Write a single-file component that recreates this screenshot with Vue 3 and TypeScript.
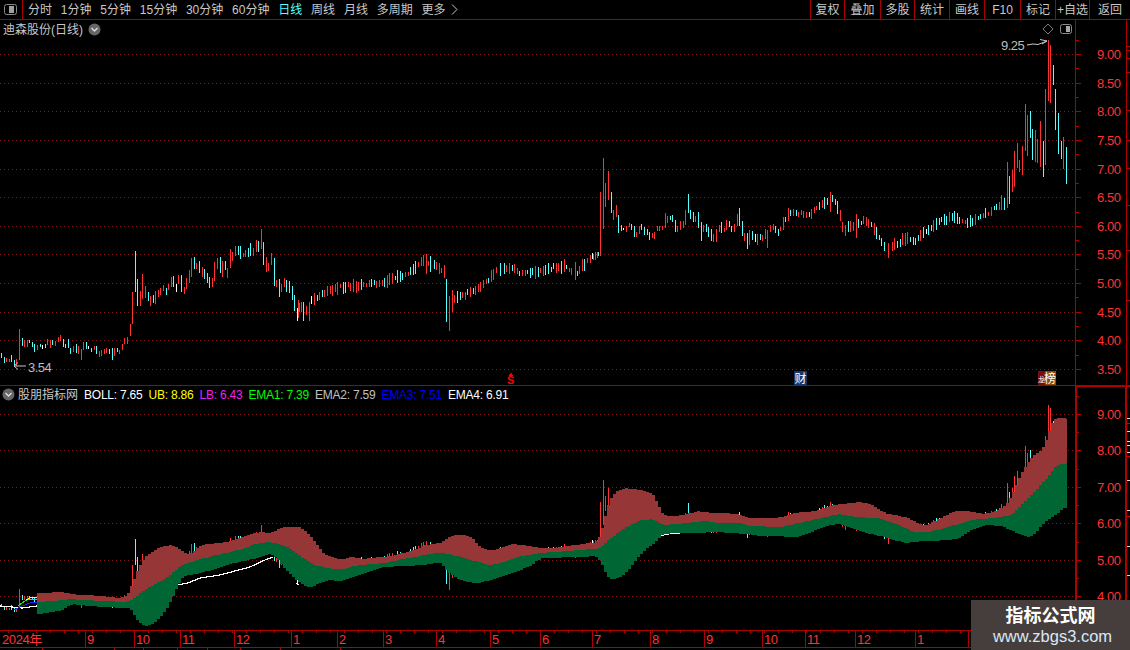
<script setup lang="ts">
type Pt = [number, number]
const RED = '#ff3232'
const CYAN = '#54ffff'
const WHITE = '#ffffff'

// measured candles: "zoomX colour y1 y2"
const z10 = `4c385-398 13c397-413 19r400-411 28r402-410 34c390-410 43c405-420 49r403-422 58r312-405 67c340-363 73r345-365 82r345-365 88c345-354 97c352-366 103c357-381 112r361-375 121c357-367 127w361-373 136c357-368 142r343-360 151r345-369 157c345-361 166r347-364 175r336-351 181r331-349 190c342-366 196c358-370 205c343-370 211c368-386 220r363-382 229c357-384 235r364-386 244r373-404 250r352-375 259c351-372 265w362-372 274c370-380 283r363-375 289c364-386 298r377-395 304r375-392 313r372-386 319r370-385 328c373-387 337c370-404 343r370-393 352c369-380 358r376-386 367r358-375 373r339-356 382r337-357 391r296-333 397r201-296 406c79-200 412c162-242 421r198-243 427r147-221 436r183-220 445c200-228 451r212-242 460c210-235 466r197-236 475r195-217 481r188-210 490r180-198 499c190-209 505r177-195 514r155-187 520c153-187 529w177-200 535r150-177 544c150-202 553r186-207 559r160-192 568r135-175 574r100-157 583c96-131 589r115-131 598c108-143 607r127-155 613c132-163 622c145-173 628c155-188 637r160-186 643r110-167 652r98-131 661c96-143 667r108-155 676c108-135 682r128-158 691r72-128 697r82-107 706r64-93 715c64-90 721c64-101 730r84-97 736r75-97 745c69-95 751c54-92 760r69-92 769r45-80 775c47-80 784r12-72 790c52-120 799r96-140 805r114-137 814r85-120 823c100-182 829r165-185 838c163-215 844r176-202 853r160-187 859c165-200 868c168-205 877c183-225 883c210-257 892w250-287 898r235-262`
const z8 = `30r318-330 39r313-330 45r310-330 54c306-318 60r127-318 70r24-237 76r99-171 85r63-150 94c126-189 100r180-210 109r165-201 115c195-249 124c225-243 130w234-240 139r228-246 148r219-231 154c222-240 163c228-261 169r246-261 178r228-252 184c222-240 193c231-255 202c237-255 208c246-270 217r249-264 223r246-267 232r229-243 238r229-243 247r229-240 256r189-234 262r198-219 271c198-210 277c195-216 286c210-246 292r229-246 301r213-240 310r213-234 316r180-225 325c132-189 331c180-207 340c186-216 346r198-216 355c186-234 364c216-273 370r225-246 379c222-246 385c231-261 394c237-273 400r252-276 409r237-276 418r225-246 424c216-249 433r234-246 439r210-240 448c213-231 454c228-246 463r222-246 472r192-228 478c174-228 487c213-258 493r249-273 502c249-297 508r240-285 517c243-270 526w252-276 532r252-285 541c252-270 547r255-273 556r237-267 562r240-294 571r225-246 580r222-240 586c228-249 595c237-258`
const z6 = `994c206-210 996c204-210 999r202-210 1001r195-210 1004c198-210 1007r162-208 1009c176-204 1012r170-192 1014r151-187 1017r143-168 1019r160-172 1022r146-175 1025r104-151 1027r115-156 1030c111-138 1032c129-160 1035r130-162 1037r139-163 1040r121-167 1043c141-177 1045r89-165 1048r40-101 1050r45-103 1053c65-85 1055c89-130 1058c113-154 1061c141-159 1063r137-169 1066c147-184`

interface Bar { x: number; c: string; a: number; b: number }
const bars: Bar[] = []
const colourOf: Record<string, string> = { r: RED, c: CYAN, w: WHITE }
function parse(src: string, fx: (v: number) => number, fy: (v: number) => number) {
  for (const tok of src.split(/\s+/)) {
    const m = /^(\d+)([rcw])(\d+)-(\d+)$/.exec(tok)
    if (!m) continue
    bars.push({ x: Math.round(fx(+m[1])), c: colourOf[m[2]], a: fy(+m[3]), b: fy(+m[4]) })
  }
}
parse(z10, v => v / 3, v => Math.round(225 + v / 3))
parse(z8, v => 580 + v / 3, v => Math.round(150 + v / 3))
parse(z6, v => v, v => v)

// mid line of the stretches filled in by a seeded generator
const midA: Pt[] = [[301,308],[306,310],[312,300],[318,296],[325,292],[340,287],[360,285],[380,283],[400,277],[415,268],[423,260],[430,263],[440,268],[444,272],[453,300],[460,297],[470,292],[480,288],[490,278],[497,268],[510,268],[520,272],[535,272],[550,268],[565,266],[575,276],[583,265],[590,258],[597,254]]
const midB: Pt[] = [[780,228],[790,212],[800,214],[810,215],[818,206],[825,203],[832,199],[838,208],[843,230],[855,224],[865,220],[872,225],[880,240],[888,251],[895,245],[905,238],[915,241],[925,232],[935,224],[945,219],[955,217],[965,222],[975,220],[985,214],[992,210]]
const extra: [number, string, number, number][] = [[298,RED,300,318],[303,CYAN,302,321],[309,RED,302,321],[426,RED,254,274],[430,CYAN,256,272],[446,CYAN,279,322],[449,RED,296,331],[452,RED,290,312],[500,CYAN,263,276],[575,RED,262,280],[597,RED,252,258],[830,RED,192,212],[888,RED,243,258],[856,RED,214,238]]

function lerp(pts: Pt[], x: number): number {
  if (x <= pts[0][0]) return pts[0][1]
  for (let i = 1; i < pts.length; i++) {
    if (x <= pts[i][0]) {
      const [x0, y0] = pts[i - 1]
      const [x1, y1] = pts[i]
      return y0 + (y1 - y0) * (x - x0) / (x1 - x0)
    }
  }
  return pts[pts.length - 1][1]
}
let seed = 4711
const rnd = () => { seed = (seed * 16807) % 2147483647; return seed / 2147483647 }
function fill(pts: Pt[]) {
  const start = pts[0][0]
  const end = pts[pts.length - 1][0]
  for (let x = start; x <= end; x += 2.6) {
    const px = Math.round(x)
    if (extra.some(e => Math.abs(e[0] - px) < 2)) continue
    const m = lerp(pts, x) + (rnd() - 0.5) * 3
    const h = 2 + rnd() * 4.5
    const up = rnd() > 0.42
    bars.push({ x: px, c: rnd() > 0.97 ? WHITE : up ? RED : CYAN, a: Math.round(m - h), b: Math.round(m + h) })
  }
}
fill(midA)
fill(midB)
for (const e of extra) bars.push({ x: e[0], c: e[1], a: e[2], b: e[3] })

const upperY = (y: number) => y
const lowerY = (y: number) => Math.round(414 + (y - 54) * 0.6356)
function barPath(colour: string, map: (y: number) => number): string {
  return bars.filter(b => b.c === colour)
    .map(b => `M${b.x + 0.5} ${map(b.a)}V${Math.max(map(b.b), map(b.a) + 1)}`).join('')
}
const candleSets = [RED, CYAN, WHITE].map(c => ({ c, top: barPath(c, upperY), low: barPath(c, lowerY) }))

// band edges of the lower panel
const bandTop: Pt[] = [[37,593],[63,592],[68,594],[100,596],[120,598],[128,594],[133,577],[143,557],[160,546],[172,545],[183,553],[188,555],[200,545],[227,542],[257,532],[270,533],[280,527],[300,527],[310,537],[323,555],[340,560],[350,556],[360,559],[390,556],[413,550],[423,545],[440,543],[447,537],[457,534],[470,537],[480,548],[490,551],[510,544],[523,545],[540,548],[553,548],[573,545],[597,542],[603,523],[607,500],[617,490],[623,488],[640,490],[653,494],[660,514],[670,517],[685,514],[697,511],[710,513],[723,513],[737,514],[747,518],[777,518],[793,513],[813,511],[833,505],[857,502],[870,504],[883,513],[907,518],[923,526],[940,518],[953,511],[967,511],[983,514],[993,512],[1003,507],[1010,497],[1020,473],[1030,457],[1043,449],[1048,430],[1053,417],[1067,419]]
const bandMid: Pt[] = [[37,602],[63,600],[68,599],[100,601],[128,602],[143,590],[167,577],[180,565],[203,558],[237,550],[257,543],[270,542],[287,547],[300,557],[313,565],[327,568],[340,570],[350,566],[383,563],[407,558],[440,552],[450,555],[460,557],[487,565],[497,564],[520,556],[540,553],[580,550],[600,548],[607,540],[623,528],[640,520],[653,519],[660,525],[677,524],[703,521],[717,523],[740,523],[747,526],[780,527],[807,521],[837,514],[853,517],[877,518],[893,523],[913,532],[927,532],[947,527],[970,520],[993,518],[1010,515],[1030,495],[1047,477],[1055,465],[1067,463]]
const bandLow: Pt[] = [[37,614],[63,610],[68,604],[100,607],[130,608],[137,623],[145,627],[157,620],[167,607],[177,585],[180,577],[203,572],[233,563],[260,557],[272,553],[280,565],[297,582],[307,588],[327,580],[340,581],[357,575],[383,567],[423,565],[440,562],[447,573],[463,582],[477,583],[497,578],[527,567],[540,558],[580,557],[597,556],[602,567],[608,581],[623,575],[640,553],[657,540],[660,534],[677,533],[693,533],[713,532],[747,534],[760,536],[780,536],[793,538],[810,532],[827,525],[840,524],[860,532],[887,538],[903,543],[923,541],[933,541],[957,539],[970,530],[983,525],[1000,526],[1020,535],[1030,538],[1043,522],[1057,513],[1063,507],[1067,508]]

// smoothed, then held per candle column, which gives the chart its stepped edge
function stepped(pts: Pt[]): Pt[] {
  const out: Pt[] = []
  const start = pts[0][0]
  const end = pts[pts.length - 1][0]
  const at = (x: number) => {
    let sum = 0
    for (let d = -4; d <= 4; d += 1) sum += lerp(pts, Math.min(end, Math.max(start, x + d)))
    return Math.round(sum / 9)
  }
  let prev = at(start)
  out.push([start, prev])
  for (let x = start + 3; x <= end; x += 3) {
    const y = at(x)
    out.push([x, prev], [x, y])
    prev = y
  }
  out.push([end, prev])
  return out
}
function bandPoly(top: Pt[], bottom: Pt[]): string {
  const a = stepped(top)
  const b = stepped(bottom).reverse()
  return [...a, ...b].map(p => p.join(',')).join(' ')
}
const redBand = bandPoly(bandTop, bandMid)
const greenBand = bandPoly(bandMid, bandLow)
const toPoints = (p: Pt[]) => p.map(q => q.join(',')).join(' ')
const whiteSegs = [
  toPoints([[0,606],[12,607],[22,608],[37,606]]),
  toPoints([[177,585],[188,583],[200,578],[220,575],[250,567],[265,560],[273,557]]),
  toPoints([[296,583],[299,585]]),
  toPoints([[658,537],[663,535],[668,534],[680,533]]),
]
const startLines = [
  { c: '#2020ff', p: toPoints([[14,610],[22,606],[30,603],[37,602]]) },
  { c: '#00ff00', p: toPoints([[18,606],[22,603],[28,599],[37,600]]) },
  { c: '#ffff00', p: toPoints([[26,600],[30,598],[37,597]]) },
]

const topLabels = ['9.00','8.50','8.00','7.50','7.00','6.50','6.00','5.50','5.00','4.50','4.00','3.50']
  .map((t, i) => ({ t, y: Math.round(54 + i * 28.64) }))
const topMinor = Array.from({ length: 12 }, (_, i) => Math.round(54 - 14.3 + i * 28.64))
const lowLabels = ['9.00','8.00','7.00','6.00','5.00','4.00'].map((t, i) => ({ t, y: Math.round(414 + i * 36.4) }))
const lowMinor = Array.from({ length: 7 }, (_, i) => Math.round(396 + i * 36.4))
const sideMarksTop = [46, 50, 58, 72, 110, 140, 168, 205, 250, 300]
const sideMarksLow: [number, string][] = [[418,'#ddd'],[423,'#c00'],[431,'#ddd'],[441,'#ddd'],[445,'#ddd'],[452,'#ddd'],[456,'#c00'],[480,'#ddd'],[510,'#ddd'],[516,'#c00'],[546,'#ddd'],[575,'#ddd']]

const months = [[0,'2024年'],[85,'9'],[134,'10'],[180,'11'],[234,'12'],[291,'1'],[337,'2'],[383,'3'],[436,'4'],[490,'5'],[540,'6'],[592,'7'],[650,'8'],[704,'9'],[762,'10'],[805,'11'],[855,'12'],[915,'1'],[968,'2']] as [number, string][]
const axisTicks = Array.from({ length: 80 }, (_, i) => 14 * i + 8)

const tabs = ['分时', '1分钟', '5分钟', '15分钟', '30分钟', '60分钟', '日线', '周线', '月线', '多周期']
const tools = [['复权',34],['叠加',36],['多股',34],['统计',35],['画线',35],['F10',36],['标记',35],['+自选',34],['返回',41]] as [string, number][]
const toolColumns = tools.map(t => `${t[1]}px`).join(' ')
const legend = [
  ['BOLL: 7.65', '#ffffff'], ['UB: 8.86', '#ffff00'], ['LB: 6.43', '#ee22ee'], ['EMA1: 7.39', '#00ff00'],
  ['EMA2: 7.59', '#c0c0c0'], ['EMA3: 7.51', '#0000f0'], ['EMA4: 6.91', '#ffffff'],
]
const bottomCells = [43, 72, 29, 34, 30, 33, 40, 60]
</script>

<template>
  <div class="screen">
    <header class="toolbar">
      <div class="layout-btn">
        <svg width="13" height="11" viewBox="0 0 13 11"><rect x=".5" y=".5" width="12" height="10" rx="2" fill="none" stroke="#8a8a8a"/><rect x="5" y="2" width="5" height="7" fill="#a0a0a0"/></svg>
      </div>
      <nav class="tabs">
        <span v-for="t in tabs" :key="t" :class="{ on: t === '日线' }">{{ t }}</span>
        <span class="more">更多<svg width="7" height="11" viewBox="0 0 7 11"><path d="M1 .5 6 5.5 1 10.5" fill="none" stroke="#c8c8c8"/></svg></span>
      </nav>
      <div class="tools" :style="{ gridTemplateColumns: toolColumns }">
        <span v-for="t in tools" :key="t[0]">{{ t[0] }}</span>
      </div>
    </header>

    <section class="panel upper">
      <svg class="plot" width="1130" height="365" viewBox="0 20 1130 365">
        <g shape-rendering="crispEdges">
          <line v-for="l in topLabels" :key="l.t" x1="0" x2="1075" :y1="l.y + .5" :y2="l.y + .5" class="dots"/>
          <path v-for="s in candleSets" :key="s.c" :d="s.top" :stroke="s.c" fill="none"/>
          <line x1="1075.5" x2="1075.5" y1="20" y2="385" class="axis"/>
          <line x1="1126.5" x2="1126.5" y1="20" y2="385" class="axis"/>
          <line v-for="l in topLabels" :key="'t' + l.t" x1="1075" x2="1081" :y1="l.y + .5" :y2="l.y + .5" class="axis"/>
          <line v-for="y in topMinor" :key="'m' + y" x1="1075" x2="1079" :y1="y + .5" :y2="y + .5" class="axis"/>
          <line v-for="y in sideMarksTop" :key="'s' + y" x1="1127" x2="1130" :y1="y + .5" :y2="y + .5" class="axis"/>
        </g>
        <text v-for="l in topLabels" :key="'x' + l.t" x="1097" :y="l.y + 5" class="price">{{ l.t }}</text>
        <text x="1001" y="50" class="note">9.25</text>
        <path d="M1027 45 1033 44 1038 44.5 1047 41M1040 39.5 1047 41 1042 44" fill="none" stroke="#c8c8c8"/>
        <text x="28" y="372" class="note">3.54</text>
        <path d="M26 366H14M18 362.5 14 366 18 369.500" fill="none" stroke="#c8c8c8"/>
        <path d="M1048 24 1053 29 1048 34 1043 29Z" fill="none" stroke="#777"/>
        <rect x="1060.500" y="24.500" width="11" height="9" rx="2" fill="none" stroke="#8a8a8a"/>
        <rect x="1066" y="26" width="4" height="6" fill="#a8a8a8"/>
        <path d="M511 372.500 513.500 376H508.500Z" fill="#f00"/>
        <text x="507" y="384" class="mark-s">S</text>
        <rect x="794" y="371" width="13" height="14" fill="#123a6e"/>
        <text x="794.500" y="382.500" class="mark">财</text>
        <rect x="1038" y="371" width="7" height="14" fill="#7a0c0c"/>
        <rect x="1045" y="371" width="11" height="14" fill="#8a4a0e"/>
        <text x="1038" y="382" class="mark small">龙</text>
        <text x="1044" y="382.500" class="mark">榜</text>
      </svg>
      <div class="title top-title">
        <span>迪森股份(日线)</span>
        <svg width="13" height="13" viewBox="0 0 13 13"><circle cx="6.500" cy="6.500" r="6" fill="#666"/><path d="M3.500 5 6.500 8 9.500 5" fill="none" stroke="#ddd" stroke-width="1.400"/></svg>
      </div>
    </section>

    <section class="panel lower">
      <svg class="plot" width="1130" height="244" viewBox="0 386 1130 244">
        <g shape-rendering="crispEdges">
          <line v-for="l in lowLabels" :key="l.t" x1="0" x2="1075" :y1="l.y + .5" :y2="l.y + .5" class="dots"/>
          <path v-for="s in candleSets" :key="s.c" :d="s.low" :stroke="s.c" fill="none"/>
          <polyline v-for="(p, i) in whiteSegs" :key="i" :points="p" fill="none" stroke="#fff" stroke-width="1.200"/>
          <polyline v-for="l in startLines" :key="l.c" :points="l.p" fill="none" :stroke="l.c"/>
          <polygon :points="redBand" fill="#963636"/>
          <polygon :points="greenBand" fill="#006633"/>
          <line x1="1076" x2="1076" y1="386" y2="630" class="axis" stroke-width="2"/>
          <line x1="1126" x2="1126" y1="386" y2="630" class="axis" stroke-width="2"/>
          <line x1="1075" x2="1130" y1="386.500" y2="386.500" class="axis"/>
          <line v-for="l in lowLabels" :key="'t' + l.t" x1="1075" x2="1081" :y1="l.y + .5" :y2="l.y + .5" class="axis"/>
          <line v-for="y in lowMinor" :key="'m' + y" x1="1075" x2="1079" :y1="y + .5" :y2="y + .5" class="axis"/>
          <line v-for="m in sideMarksLow" :key="'s' + m[0]" x1="1127" x2="1130" :y1="m[0] + .5" :y2="m[0] + .5" :stroke="m[1]"/>
        </g>
        <text v-for="l in lowLabels" :key="'x' + l.t" x="1097" :y="l.y + 5" class="price">{{ l.t }}</text>
      </svg>
      <div class="title low-title">
        <svg width="13" height="13" viewBox="0 0 13 13"><circle cx="6.500" cy="6.500" r="6" fill="#666"/><path d="M3.500 5 6.500 8 9.500 5" fill="none" stroke="#ddd" stroke-width="1.400"/></svg>
        <span>股朋指标网</span>
        <span class="legend">
          <span v-for="l in legend" :key="l[0]" :style="{ color: l[1] }">{{ l[0] }}</span>
        </span>
      </div>
    </section>

    <svg class="timeline" width="1130" height="18" viewBox="0 630 1130 18">
      <g shape-rendering="crispEdges">
        <line x1="0" x2="1130" y1="630.500" y2="630.500" class="axis"/>
        <line x1="0" x2="1130" y1="647.500" y2="647.500" class="axis"/>
        <line v-for="t in axisTicks" :key="t" :x1="t + .5" :x2="t + .5" y1="631" y2="633" class="axis"/>
        <line v-for="m in months.slice(1)" :key="m[0]" :x1="m[0] + .5" :x2="m[0] + .5" y1="631" y2="647" class="axis"/>
      </g>
      <text v-for="m in months" :key="'l' + m[0]" :x="m[0] + 2" y="644" class="month">{{ m[1] }}</text>
    </svg>

    <footer class="bottom-tabs">
      <span v-for="(w, i) in bottomCells" :key="i" :style="{ width: w + 'px' }"></span>
    </footer>

    <aside class="stamp">
      <strong>指标公式网</strong>
      <span>www.zbgs3.com</span>
    </aside>
  </div>
</template>

<style>
html, body { margin: 0; background: #000; overflow: hidden; }
</style>

<style scoped>
.screen {
  position: relative;
  display: flex;
  flex-direction: column;
  width: 1130px;
  height: 650px;
  overflow: hidden;
  background: #000;
  color: #c8c8c8;
  font: 12px/1 "Liberation Sans", "Noto Sans CJK SC", sans-serif;
}
.toolbar {
  display: flex;
  flex: 0 0 auto;
  height: 19px;
  align-items: stretch;
  border-bottom: 1px solid #a80000;
}
.layout-btn {
  display: flex;
  width: 23px;
  align-items: center;
  justify-content: center;
  padding-right: 1px;
  box-sizing: border-box;
  border-right: 1px solid #a80000;
}
.tabs {
  display: flex;
  gap: 8.8px;
  align-items: center;
  padding-left: 5px;
}
.tabs .on { color: #54ffff; }
.more { display: inline-flex; gap: 5px; align-items: center; }
.tools {
  display: grid;
  margin-left: auto;
}
.tools span {
  display: flex;
  align-items: center;
  justify-content: center;
  box-sizing: border-box;
  border-left: 1px solid #a80000;
}
.panel { position: relative; flex: 0 0 auto; }
.upper { height: 365px; border-bottom: 1px solid #a80000; }
.lower { height: 244px; }
.plot, .timeline { display: block; flex: 0 0 auto; }
.title {
  position: absolute;
  display: flex;
  gap: 5px;
  align-items: center;
}
.top-title { left: 3px; top: 3px; }
.low-title { left: 2px; top: 2px; gap: 3px; }
.legend { display: flex; gap: 6px; margin-left: 3px; letter-spacing: -0.22px; }
.dots { stroke: #841818; stroke-dasharray: 1 3; }
.axis { stroke: #b00000; }
.price { fill: #ff3232; font-size: 13px; letter-spacing: -0.45px; }
.note { fill: #bdbdbd; font-size: 13px; letter-spacing: -0.5px; }
.month { fill: #ff3232; font-size: 13px; letter-spacing: -0.4px; }
.mark { fill: #fff; font-size: 12px; }
.mark.small { font-size: 7px; }
.mark-s { fill: #f00; font-size: 11px; font-weight: 700; }
.bottom-tabs {
  display: flex;
  flex: 1 1 auto;
  overflow: hidden;
}
.bottom-tabs span { box-sizing: border-box; border-right: 1px solid #b00000; }
.stamp {
  position: absolute;
  right: 0;
  bottom: 0;
  display: flex;
  flex-direction: column;
  gap: 1px;
  box-sizing: border-box;
  width: 159px;
  height: 50px;
  padding-top: 6px;
  align-items: center;
  background: #463e3d;
  color: #fff;
}
.stamp strong { font-size: 18px; line-height: 20px; }
.stamp span { font-size: 16.500px; line-height: 18px; color: #d8e8f8; padding-left: 4px; }
</style>
